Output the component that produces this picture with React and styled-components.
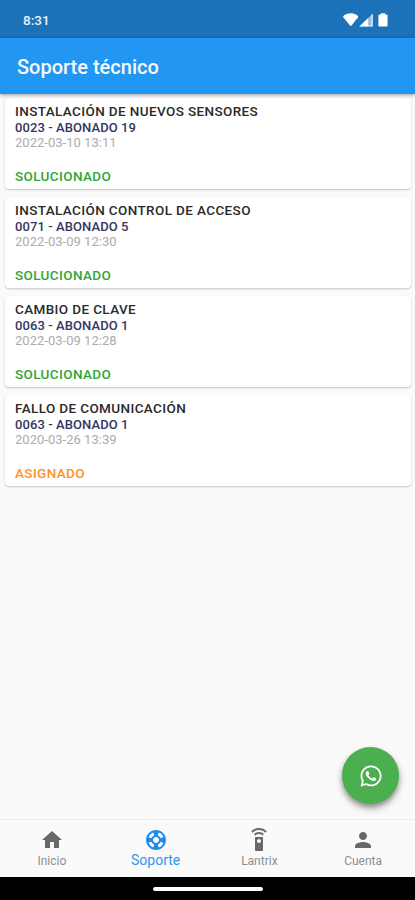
import React from "react";
import styled, { createGlobalStyle } from "styled-components";
import {
  MdHome,
  MdOutlineSupport,
  MdSettingsRemote,
  MdPerson,
} from "react-icons/md";
import { FaWhatsapp } from "react-icons/fa";

const tickets = [
  {
    id: 1,
    title: "INSTALACIÓN DE NUEVOS SENSORES",
    client: "0023 - ABONADO 19",
    date: "2022-03-10 13:11",
    status: "SOLUCIONADO",
  },
  {
    id: 2,
    title: "INSTALACIÓN CONTROL DE ACCESO",
    client: "0071 - ABONADO 5",
    date: "2022-03-09 12:30",
    status: "SOLUCIONADO",
  },
  {
    id: 3,
    title: "CAMBIO DE CLAVE",
    client: "0063 - ABONADO 1",
    date: "2022-03-09 12:28",
    status: "SOLUCIONADO",
  },
  {
    id: 4,
    title: "FALLO DE COMUNICACIÓN",
    client: "0063 - ABONADO 1",
    date: "2020-03-26 13:39",
    status: "ASIGNADO",
  },
];

const tabs = [
  { label: "Inicio", Icon: MdHome },
  { label: "Soporte", Icon: MdOutlineSupport },
  { label: "Lantrix", Icon: MdSettingsRemote },
  { label: "Cuenta", Icon: MdPerson },
];

const App = () => {
  return (
    <>
      <GlobalStyle />
      <Screen>
        <StatusBar>
          <Clock>8:31</Clock>
          <StatusIcons />
        </StatusBar>
        <AppBar>
          <AppTitle>Soporte técnico</AppTitle>
        </AppBar>
        <TicketList>
          {tickets.map((item) => (
            <TicketCard key={item.id}>
              <TicketTitle>{item.title}</TicketTitle>
              <TicketClient>{item.client}</TicketClient>
              <TicketDate>{item.date}</TicketDate>
              <TicketStatus $status={item.status}>{item.status}</TicketStatus>
            </TicketCard>
          ))}
        </TicketList>
        <WhatsappButton aria-label="WhatsApp">
          <FaWhatsapp size={24} />
        </WhatsappButton>
        <TabBar>
          {tabs.map(({ label, Icon }) => (
            <Tab key={label} $active={label === "Soporte"}>
              <Icon size={24} />
              <TabLabel $active={label === "Soporte"}>{label}</TabLabel>
            </Tab>
          ))}
        </TabBar>
        <GestureBar>
          <GestureHandle />
        </GestureBar>
      </Screen>
    </>
  );
};

const StatusIcons = () => (
  <svg width="46" height="16" viewBox="0 0 46 16" fill="#fff">
    {/* wifi */}
    <path d="M0.3 4C4.2 0.4 11.2 0.4 15 4V5.2L8.6 13.4Q7.8 14 7 13.4L0.3 5.2Z" />
    {/* signal */}
    <path d="M29.8 1.6V14.6H16.4Z" fillOpacity="0.55" />
    <path d="M25.2 6.1V14.6H16.4Z" />
    <path d="M28.4 2.9L29.8 1.6V14.6H25.2V13.4H28.4Z" fillOpacity="0.7" />
    {/* battery */}
    <path d="M37.8 1.2H42.2V2.4H43.4Q44.6 2.4 44.6 3.6V13.2Q44.6 14.4 43.4 14.4H36.6Q35.4 14.4 35.4 13.2V3.6Q35.4 2.4 36.6 2.4H37.8Z" />
  </svg>
);

const GlobalStyle = createGlobalStyle`
  * {
    box-sizing: border-box;
  }

  body {
    margin: 0;
    font-family: Roboto, sans-serif;
    background-color: #fafafa;
  }
`;

const Screen = styled.div`
  position: relative;
  display: flex;
  flex-direction: column;
  width: 415px;
  height: 900px;
  overflow: hidden;
  background-color: #fafafa;
`;

const StatusBar = styled.div`
  display: flex;
  justify-content: space-between;
  align-items: center;
  flex: none;
  height: 38px;
  padding: 1px 26px 0 23px;
  background-color: #1c72b8;
`;

const Clock = styled.div`
  color: #eaf4fc;
  font-size: 13.5px;
  font-weight: 500;
`;

const AppBar = styled.header`
  display: flex;
  align-items: center;
  flex: none;
  height: 56px;
  padding: 2px 17px 0;
  background-color: #2296f3;
  box-shadow: 0 1px 4px rgba(0, 0, 0, 0.4);
  z-index: 1;
`;

const AppTitle = styled.h1`
  margin: 0;
  color: #f4faff;
  font-size: 20px;
  font-weight: 500;
`;

const TicketList = styled.main`
  display: flex;
  flex-direction: column;
  flex: 1;
  gap: 8px;
  padding: 4px 4px 0 5px;
`;

const TicketCard = styled.article`
  display: flex;
  flex-direction: column;
  height: 91px;
  padding: 6px 10px 0;
  border-radius: 4px;
  background-color: #fff;
  box-shadow: 0 1px 2px rgba(0, 0, 0, 0.22);
  font-size: 13.5px;
  line-height: 15px;
  white-space: nowrap;
`;

const TicketTitle = styled.div`
  color: #2a2a2a;
  font-weight: 500;
  letter-spacing: 0.38px;
`;

const TicketClient = styled.div`
  margin-top: 1px;
  color: #34365f;
  font-weight: 500;
  font-size: 13px;
  letter-spacing: 0.08px;
`;

const TicketDate = styled.div`
  color: #acacac;
  font-size: 13px;
  letter-spacing: 0.02px;
`;

const TicketStatus = styled.div`
  margin-top: 19px;
  color: ${(props) => (props.$status === "ASIGNADO" ? "#ff9226" : "#30a536")};
  font-weight: 500;
  letter-spacing: 0.38px;
`;

const WhatsappButton = styled.button`
  position: absolute;
  right: 16px;
  bottom: 96px;
  display: flex;
  justify-content: center;
  align-items: center;
  width: 57px;
  height: 57px;
  padding: 0;
  border: none;
  border-radius: 50%;
  color: #fff;
  background-color: #4baf50;
  box-shadow: 0 3px 5px rgba(0, 0, 0, 0.3), 0 5px 9px rgba(0, 0, 0, 0.2);
`;

const TabBar = styled.nav`
  display: flex;
  flex: none;
  height: 58px;
  border-top: 1px solid #efefef;
  background-color: #fafafa;
`;

const Tab = styled.div`
  display: flex;
  flex-direction: column;
  align-items: center;
  flex: 1;
  padding-top: 8px;
  color: ${(props) => (props.$active ? "#1f8cec" : "#686868")};
`;

const TabLabel = styled.div`
  margin-top: ${(props) => (props.$active ? "0" : "1px")};
  color: ${(props) => (props.$active ? "#3296ee" : "#8f8f8f")};
  font-size: ${(props) => (props.$active ? "14px" : "12px")};
  line-height: 17px;
`;

const GestureBar = styled.div`
  display: flex;
  justify-content: center;
  align-items: center;
  flex: none;
  height: 23px;
  background-color: #000;
`;

const GestureHandle = styled.div`
  width: 110px;
  height: 4px;
  border-radius: 2px;
  background-color: #fff;
`;

export default App;
